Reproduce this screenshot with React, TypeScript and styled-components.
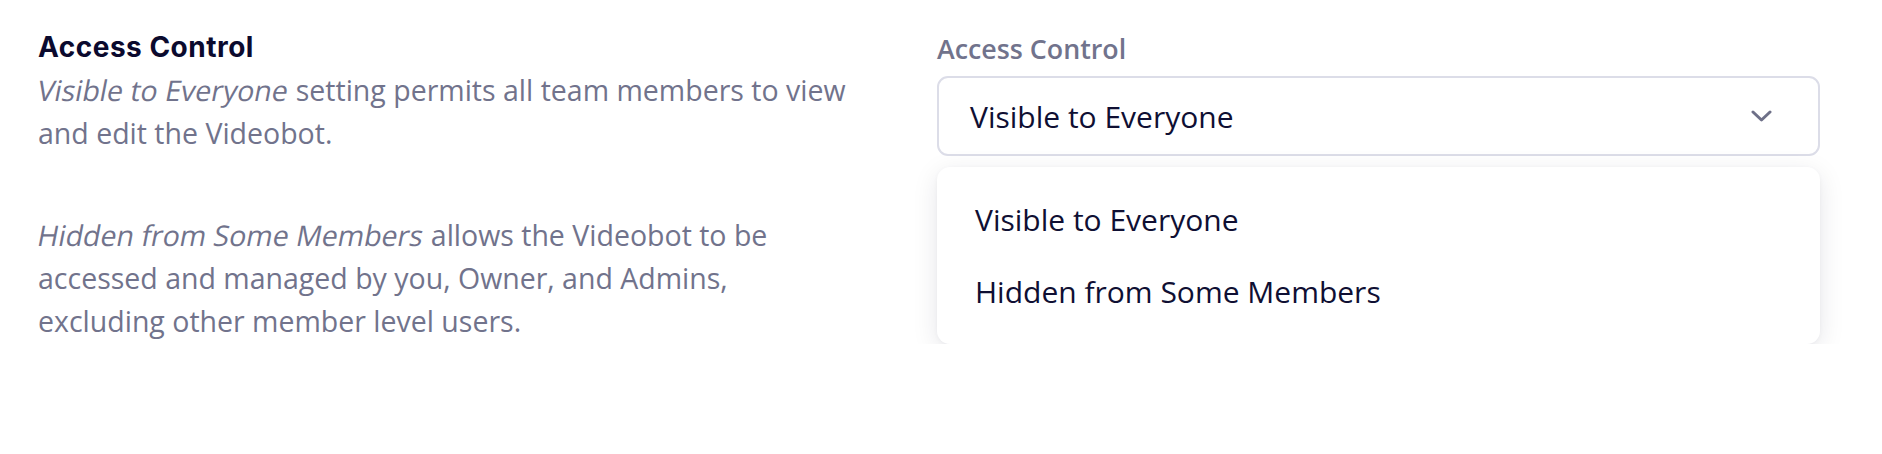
import React from "react";
import styled, { createGlobalStyle } from "styled-components";

const GlobalStyle = createGlobalStyle`
    html, body {
        margin: 0;
        padding: 0;
        background: #ffffff;
    }
    body {
        font-family: "Open Sans", "Noto Sans", sans-serif;
    }
`;

const Page = styled.div`
    display: grid;
    grid-template-columns: 882px 883px;
    gap: 17px;
    padding: 31px 62px 0 38px;
`;

const Info = styled.div`
    padding-right: 67px;
`;

const Heading = styled.h3`
    margin: 0;
    font-family: "Inter", "Noto Sans", sans-serif;
    font-weight: 700;
    font-size: 28px;
    letter-spacing: 0.5px;
    line-height: 32px;
    color: #0b0a2e;
`;

const Paragraph = styled.p<{ $gap?: number }>`
    margin: ${(p) => p.$gap ?? 0}px 0 0;
    font-size: 28.5px;
    line-height: 43px;
    color: #71738c;
`;

// the source uses a slanted regular face, not the true italic
const Slanted = styled.em`
    display: inline-block;
    font-style: normal;
    transform: skewX(-11deg);
`;

const Field = styled.div`
    display: flex;
    flex-direction: column;
    padding-top: 2px;
`;

const Label = styled.label`
    font-size: 26.8px;
    line-height: 32px;
    font-weight: 600;
    color: #71738c;
    margin-bottom: 11px;
`;

const SelectBox = styled.div`
    height: 80px;
    box-sizing: border-box;
    display: flex;
    align-items: center;
    justify-content: space-between;
    padding: 0 46px 0 31px;
    border: 2px solid #dcdde8;
    border-radius: 11px;
    font-size: 30px;
    color: #0f0f33;
`;

const Chevron = styled.svg`
    width: 21px;
    height: 12px;
    color: #6e7088;
`;

const Menu = styled.ul`
    list-style: none;
    margin: 11px 0 0;
    padding: 16px 0;
    background: #ffffff;
    border-radius: 13px;
    box-shadow: 0 6px 26px rgba(20, 20, 50, 0.1), 0 1px 4px rgba(20, 20, 50, 0.04);
`;

const Option = styled.li`
    height: 72.5px;
    display: flex;
    align-items: center;
    padding-left: 38px;
    font-size: 30px;
    color: #0f0f33;
`;

const options = ["Visible to Everyone", "Hidden from Some Members"];

export default function App() {
    return (
        <>
            <GlobalStyle />
            <Page>
                <Info>
                    <Heading>Access Control</Heading>
                    <Paragraph $gap={6}>
                        <Slanted>Visible to Everyone</Slanted> setting permits all team members to view and edit the Videobot.
                    </Paragraph>
                    <Paragraph $gap={59}>
                        <Slanted>Hidden from Some Members</Slanted> allows the Videobot to be accessed and managed by you, Owner, and Admins, excluding other member level users.
                    </Paragraph>
                </Info>
                <Field>
                    <Label>Access Control</Label>
                    <SelectBox>
                        <span>Visible to Everyone</span>
                        <Chevron viewBox="0 0 21 12" fill="none">
                            <path d="M2 2l8.5 8L19 2" stroke="currentColor" strokeWidth="3" strokeLinecap="round" strokeLinejoin="round" />
                        </Chevron>
                    </SelectBox>
                    <Menu>
                        {options.map((o) => (
                            <Option key={o}>{o}</Option>
                        ))}
                    </Menu>
                </Field>
            </Page>
        </>
    );
}
